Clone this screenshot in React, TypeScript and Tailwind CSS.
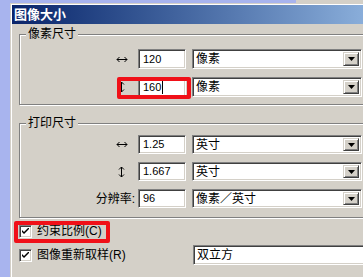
import React from "react";

const FONT = "font-['Liberation_Sans','Noto_Sans_CJK_SC',sans-serif]";

function HArrow() {
  return (
    <svg width="12" height="7" viewBox="0 0 12 7" className="block">
      <path d="M1 3.5H11" stroke="#000" strokeWidth="1" />
      <path d="M3.5 1L1 3.5L3.5 6" stroke="#000" strokeWidth="1" fill="none" />
      <path d="M8.5 1L11 3.5L8.5 6" stroke="#000" strokeWidth="1" fill="none" />
    </svg>
  );
}

function VArrow() {
  return (
    <svg width="7" height="12" viewBox="0 0 7 12" className="block">
      <path d="M3.5 1V11" stroke="#000" strokeWidth="1" />
      <path d="M1 3.5L3.5 1L6 3.5" stroke="#000" strokeWidth="1" fill="none" />
      <path d="M1 8.5L3.5 11L6 8.5" stroke="#000" strokeWidth="1" fill="none" />
    </svg>
  );
}

function Sunken({ className = "", children }: { className?: string; children?: React.ReactNode }) {
  return (
    <div
      className={`shrink-0 bg-white border border-t-[#808080] border-l-[#808080] border-r-white border-b-white shadow-[inset_1px_1px_0_#404040,inset_-1px_-1px_0_#d4d0c8] flex items-center ${className}`}
    >
      {children}
    </div>
  );
}

function Select({ value, h = "h-[20px]" }: { value: string; h?: string }) {
  return (
    <Sunken className={`w-[170px] ${h} ml-[6px] pl-[3px] pr-[2px] justify-between`}>
      <span className="text-[12px] leading-none text-black">{value}</span>
      <div className="w-[16px] h-[calc(100%-4px)] bg-[#d4d0c8] border border-t-[#d4d0c8] border-l-[#d4d0c8] border-r-[#404040] border-b-[#404040] shadow-[inset_1px_1px_0_#fff,inset_-1px_-1px_0_#808080] flex items-center justify-center">
        <svg width="7" height="4" viewBox="0 0 7 4" className="block">
          <path d="M0 0H7L3.5 4Z" fill="#000" />
        </svg>
      </div>
    </Sunken>
  );
}

function NumInput({ value, h = "h-[20px]", cursor = false }: { value: string; h?: string; cursor?: boolean }) {
  return (
    <Sunken className={`w-[48px] ${h} ml-[3px] pl-[4px]`}>
      <span className="text-[11px] leading-none text-black">{value}</span>
      {cursor && <span className="w-px h-[13px] bg-black ml-[1px]" />}
    </Sunken>
  );
}

function Row({
  label,
  value,
  unit,
  h = "h-[20px]",
  cls = "",
  cursor = false,
  children,
}: {
  label: React.ReactNode;
  value: string;
  unit: string;
  h?: string;
  cls?: string;
  cursor?: boolean;
  children?: React.ReactNode;
}) {
  return (
    <div className={`relative flex items-center ${h} ${cls}`}>
      <div className="shrink-0 w-[115px] flex justify-end items-center">{label}</div>
      <NumInput value={value} h={h} cursor={cursor} />
      <Select value={unit} h={h} />
      {children}
    </div>
  );
}

function Group({ title, className = "", children }: { title: string; className?: string; children: React.ReactNode }) {
  return (
    <div
      className={`relative ml-[7px] w-[420px] border border-[#808080] shadow-[inset_1px_1px_0_#fff,1px_1px_0_#fff] ${className}`}
    >
      <div className="absolute left-[6px] top-[-8px] bg-[#d4d0c8] px-[2px] text-[12px] leading-[14px] text-black">
        {title}
      </div>
      {children}
    </div>
  );
}

function Check() {
  return (
    <div className="shrink-0 w-[13px] h-[13px] bg-white border border-t-[#808080] border-l-[#808080] border-r-white border-b-white shadow-[inset_1px_1px_0_#404040,inset_-1px_-1px_0_#d4d0c8] flex items-center justify-center">
      <svg width="7" height="7" viewBox="0 0 7 7" className="block">
        <path d="M0 2V4L2 6L7 1V-1L2 4Z" fill="#000" />
      </svg>
    </div>
  );
}

export default function App() {
  return (
    <div className={`w-[363px] h-[277px] overflow-hidden bg-[#a8b4ee] ${FONT}`}>
      <div className="flex h-[3px]">
        <div className="w-[296px]" />
        <div className="flex-1 bg-[#d4d0c8]" />
      </div>
      <div className="ml-[10px] w-[440px] h-[274px] border-l border-t border-[#d4d0c8] bg-[#d4d0c8]">
        <div className="h-full border-l border-t border-white">
          <div className="h-[19px] w-[420px] bg-gradient-to-r from-[#0a246a] to-[#a6caf0] flex items-center pl-[2px]">
            <span className="text-white font-bold text-[13px] leading-none">图像大小</span>
          </div>

          <Group title="像素尺寸" className="mt-[10px] h-[71px]">
            <Row label={<div className="pr-[7px]"><HArrow /></div>} value="120" unit="像素" cls="mt-[14px]" />
            <Row
              label={<div className="pr-[10px]"><VArrow /></div>}
              value="160"
              unit="像素"
              cls="mt-[8px]"
              cursor
            >
              <div className="absolute left-[97px] top-0 w-[74px] h-[22px] border-[4px] border-[#f01018] rounded-[2px]" />
            </Row>
          </Group>

          <Group title="打印尺寸" className="mt-[18px] h-[95px]">
            <Row label={<div className="pr-[7px]"><HArrow /></div>} value="1.25" unit="英寸" h="h-[19px]" cls="mt-[11px]" />
            <Row label={<div className="pr-[10px]"><VArrow /></div>} value="1.667" unit="英寸" h="h-[19px]" cls="mt-[8px]" />
            <Row
              label={<span className="text-[12px] leading-none text-black">分辨率:</span>}
              value="96"
              unit="像素／英寸"
              h="h-[19px]"
              cls="mt-[8px]"
            />
          </Group>

          <div className="relative mt-[6px] h-[14px] pl-[7px] flex items-center">
            <Check />
            <span className="ml-[5px] text-[12px] leading-none text-black">约束比例(C)</span>
            <div className="absolute left-[2px] top-[-3px] w-[96px] h-[22px] border-[4px] border-[#f01018] rounded-[2px]" />
          </div>

          <div className="mt-[7px] h-[20px] pl-[7px] flex items-center">
            <div className="shrink-0 w-[174px] flex items-center">
              <Check />
              <span className="ml-[5px] text-[12px] leading-none text-black">图像重新取样(R)</span>
            </div>
            <Sunken className="w-[300px] h-[20px] pl-[3px]">
              <span className="text-[12px] leading-none text-black">双立方</span>
            </Sunken>
          </div>
        </div>
      </div>
    </div>
  );
}
